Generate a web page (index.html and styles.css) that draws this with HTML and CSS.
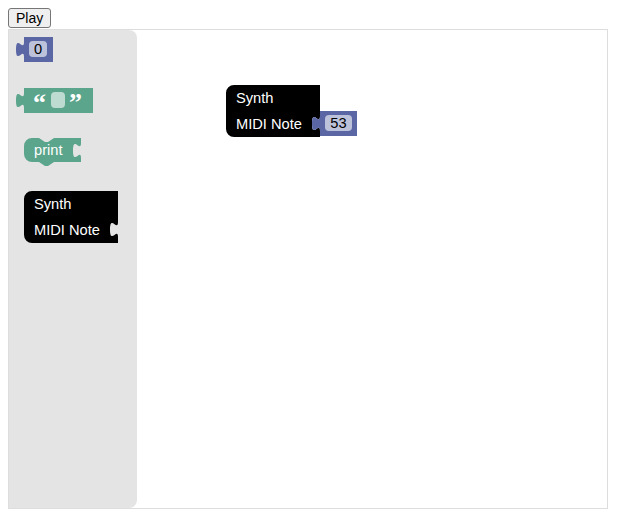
FILE: index.html
```html
<!DOCTYPE html>
<html>
<head>
<meta charset="utf-8">
<link rel="stylesheet" href="styles.css">
</head>
<body>
<button class="play">Play</button>
<div class="workspace">
  <div class="flyout">
    <svg class="flyout-svg" width="128" height="478" viewBox="0 0 128 478">
      <!-- math number 0 -->
      <g transform="translate(15,7)">
        <path class="b-math" d="M0,0 H29 V25 H0 V20 c0,-10 -8,8 -8,-7.5 s8,2.5 8,-7.5 Z"/>
        <rect class="field" x="5" y="4" width="18" height="16" rx="4" ry="4"/>
        <text class="ftext" x="14" y="17">0</text>
      </g>
      <!-- text block -->
      <g transform="translate(15,58)">
        <path class="b-text" d="M0,0 H69 V25 H0 V20 c0,-10 -8,8 -8,-7.5 s8,2.5 8,-7.5 Z"/>
        <text class="quote" x="9" y="23">“</text>
        <rect class="field" x="27" y="4" width="14" height="16" rx="4" ry="4"/>
        <text class="quote" x="45" y="23">”</text>
      </g>
      <!-- print -->
      <g transform="translate(15,108)">
        <path class="b-text" d="M0,8 A8,8 0 0,1 8,0 H15 l6,4 3,0 6,-4 H57 V5 c0,10 -8,-8 -8,7.5 s8,-2.5 8,7.5 V24 H30 l-6,4 -3,0 -6,-4 H8 A8,8 0 0,1 0,16 Z"/>
        <text class="label" x="10" y="17">print</text>
      </g>
      <!-- synth -->
      <g transform="translate(15,161)">
        <path class="b-synth" d="M0,8 A8,8 0 0,1 8,0 H94 V31 c0,10 -8,-8 -8,7.5 s8,-2.5 8,7.5 V52 H8 A8,8 0 0,1 0,44 Z"/>
        <text class="label" x="10" y="18">Synth</text>
        <text class="label" x="10" y="44">MIDI Note</text>
      </g>
    </svg>
  </div>
  <div class="canvas">
    <svg class="ws-block" width="131" height="52" viewBox="0 0 131 52">
      <path class="b-synth" d="M0,8 A8,8 0 0,1 8,0 H94 V31 c0,10 -8,-8 -8,7.5 s8,-2.5 8,7.5 V52 H8 A8,8 0 0,1 0,44 Z"/>
      <text class="label" x="10" y="18">Synth</text>
      <text class="label" x="10" y="44">MIDI Note</text>
      <g transform="translate(94,26)">
        <path class="b-math" d="M0,0 H37 V25 H0 V20 c0,-10 -8,8 -8,-7.5 s8,2.5 8,-7.5 Z"/>
        <rect class="field" x="5" y="4" width="27" height="16" rx="4" ry="4"/>
        <text class="ftext" x="18.5" y="17">53</text>
      </g>
    </svg>
  </div>
</div>
</body>
</html>
```

FILE: styles.css
```css
html, body {
  background: #fff;
}
body {
  margin: 8px;
  font-family: "Liberation Sans", Arial, sans-serif;
}
.play {
  display: block;
  height: 20px;
  padding: 0 7px;
  font-family: "Liberation Sans", Arial, sans-serif;
  font-size: 14px;
  color: #000;
  background: #efefef;
  border: 1px solid #767676;
  border-radius: 3px;
}
.workspace {
  margin-top: 1px;
  width: 600px;
  height: 480px;
  box-sizing: border-box;
  border: 1px solid #ddd;
  display: flex;
}
.flyout {
  width: 128px;
  flex: none;
  background: #e4e4e4;
  border-radius: 0 8px 8px 0;
}
.flyout-svg {
  display: block;
}
.canvas {
  flex: 1;
  position: relative;
}
.ws-block {
  position: absolute;
  left: 89px;
  top: 55px;
  overflow: visible;
}
.b-math {
  fill: #5b67a5;
}
.b-text {
  fill: #5ba58c;
}
.b-synth {
  fill: #000;
}
.field {
  fill: #fff;
  fill-opacity: 0.6;
}
.ftext {
  font-family: "Liberation Sans", Arial, sans-serif;
  font-size: 14.67px;
  fill: #000;
  text-anchor: middle;
}
.label {
  font-family: "Liberation Sans", Arial, sans-serif;
  font-size: 14.67px;
  fill: #fff;
}
.quote {
  font-family: "Liberation Serif", serif;
  font-weight: bold;
  font-size: 26px;
  fill: #fff;
}
```
